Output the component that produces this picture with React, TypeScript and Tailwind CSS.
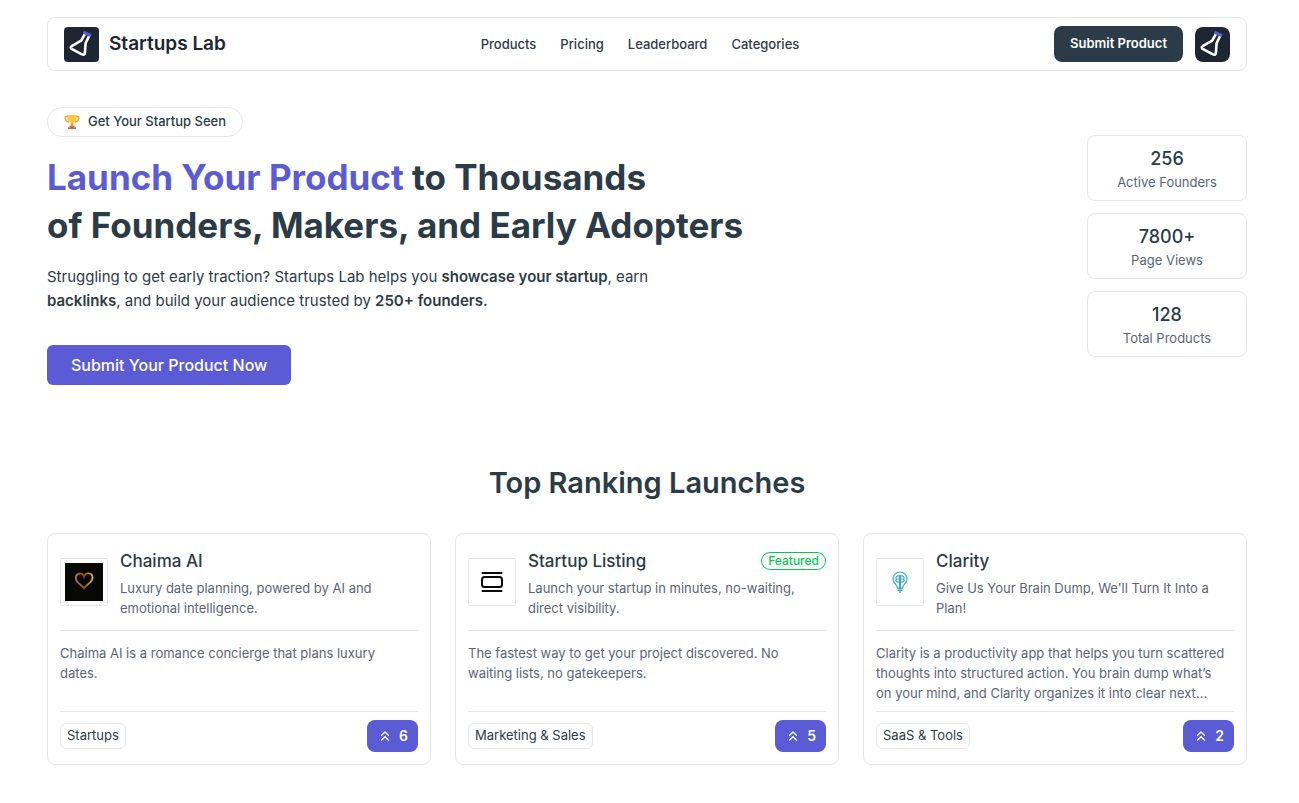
import type { ReactNode } from "react";
import { ChevronsUp } from "lucide-react";

type Launch = {
  name: string;
  tagline: string;
  description: string;
  category: string;
  votes: number;
  featured?: boolean;
  logo: ReactNode;
};

const links = ["Products", "Pricing", "Leaderboard", "Categories"];

const stats = [
  { value: "256", label: "Active Founders" },
  { value: "7800+", label: "Page Views" },
  { value: "128", label: "Total Products" },
];

function FlaskLogo({ className }: { className?: string }) {
  return (
    <svg viewBox="0 0 35 35" className={className} aria-hidden="true">
      <rect width="35" height="35" fill="#1e2633" />
      <path
        d="M20.6 7.6 L17.2 13.6 L7.6 19.2 Q5.8 20.6 7.6 21.9 L18 27.4 Q20.5 28.5 20.9 25.8 L21.6 16.2 L24.8 9.6"
        fill="none"
        stroke="#fff"
        strokeWidth="2.6"
        strokeLinecap="round"
        strokeLinejoin="round"
      />
      <path d="M19.4 5.1 L27 8.7" stroke="#5b5bd6" strokeWidth="3" />
    </svg>
  );
}

function Trophy() {
  return (
    <svg viewBox="0 0 16 16" className="size-4" aria-hidden="true">
      <path
        d="M4 2.5H1.4C1 5.5 2.2 7.4 5 8M12 2.5h2.6c.4 3-.8 4.9-3.6 5.500"
        fill="none"
        stroke="#f7a032"
        strokeWidth="1.4"
      />
      <path d="M3.2 1h9.6c0 5-1.6 8-4.8 9-3.2-1-4.8-4-4.8-9z" fill="#ffc83d" />
      <path d="M6.8 9.5h2.4V12H6.8z" fill="#f19020" />
      <path d="M5.5 11.8h5v1.4h-5zM4 13.2h8V15H4z" fill="#c8694b" />
    </svg>
  );
}

function HeartLogo() {
  return (
    <svg viewBox="0 0 38 38" className="size-[38px]" aria-hidden="true">
      <defs>
        <linearGradient id="gold" x1="0" y1="0" x2="1" y2="0">
          <stop offset="0" stopColor="#b07a38" />
          <stop offset="0.5" stopColor="#7a5220" />
          <stop offset="1" stopColor="#e0ad66" />
        </linearGradient>
      </defs>
      <rect width="38" height="38" fill="#080906" />
      <path
        d="M19 13.5c-1.5-4.500-8.500-3.500-8.200 2 .3 4.500 5.700 6 8.200 9.800 2-3.500 8.500-5.300 8.500-10.800 0-5-7-5.500-8.500-1z"
        fill="none"
        stroke="url(#gold)"
        strokeWidth="1.8"
      />
    </svg>
  );
}

function StackLogo() {
  return (
    <svg
      viewBox="0 0 24 24"
      className="size-6"
      fill="none"
      stroke="#0a0a0a"
      strokeWidth="2"
      strokeLinecap="round"
      aria-hidden="true"
    >
      <path d="M2.500 3h19M2.500 21h19" />
      <rect x="2" y="7" width="20" height="10" rx="2.500" />
    </svg>
  );
}

function BulbLogo() {
  return (
    <svg viewBox="0 0 16 22" className="h-[22px] w-4" fill="none" stroke="#3fa9ba" aria-hidden="true">
      <path
        d="M5.300 17c0-2-.8-3-2-4.200C1.800 11.300 1 9.800 1 7.800 1 3.900 4 1 8 1s7 2.900 7 6.800c0 2-.8 3.500-2.300 5-1.200 1.200-2 2.200-2 4.200"
        strokeWidth="1.200"
      />
      <path
        d="M7 4.800H5.500L4 6v4l1.500 1.200H7M9 4.800h1.500L12 6v4l-1.500 1.200H9M4 8h3M9 8h3"
        strokeWidth="1.200"
      />
      <path d="M8 4V17" strokeWidth="2.200" />
      <path d="M5 17.500h6M5.500 19.300h5M7 21h2" strokeWidth="1.300" />
    </svg>
  );
}

const launches: Launch[] = [
  {
    name: "Chaima AI",
    tagline: "Luxury date planning, powered by AI and emotional intelligence.",
    description: "Chaima AI is a romance concierge that plans luxury dates.",
    category: "Startups",
    votes: 6,
    logo: <HeartLogo />,
  },
  {
    name: "Startup Listing",
    tagline: "Launch your startup in minutes, no-waiting, direct visibility.",
    description:
      "The fastest way to get your project discovered. No waiting lists, no gatekeepers.",
    category: "Marketing & Sales",
    votes: 5,
    featured: true,
    logo: <StackLogo />,
  },
  {
    name: "Clarity",
    tagline: "Give Us Your Brain Dump, We'll Turn It Into a Plan!",
    description:
      "Clarity is a productivity app that helps you turn scattered thoughts into structured action. You brain dump what’s on your mind, and Clarity organizes it into clear next…",
    category: "SaaS & Tools",
    votes: 2,
    logo: <BulbLogo />,
  },
];

function Navbar() {
  return (
    <header className="flex h-[54px] items-center justify-between rounded-lg border border-gray-200 px-4">
      <a href="#" className="flex items-center gap-2.5 text-[19px] font-semibold text-[#1e2633]">
        <FlaskLogo className="size-[35px] rounded-sm" />
        Startups Lab
      </a>
      <nav className="flex gap-6 text-[13px] leading-5 font-medium">
        {links.map((link) => (
          <a key={link} href="#">
            {link}
          </a>
        ))}
      </nav>
      <div className="flex items-center gap-3">
        <button
          type="button"
          className="h-9 rounded-lg bg-[#2b3b47] px-4 text-[13px] font-semibold text-white"
        >
          Submit Product
        </button>
        <button type="button" aria-label="Account">
          <FlaskLogo className="size-[35px] rounded-lg" />
        </button>
      </div>
    </header>
  );
}

function Hero() {
  return (
    <section className="mt-9 flex items-center justify-between">
      <div>
        <div className="flex h-[30px] w-fit items-center gap-2 rounded-full border border-gray-200 px-4 text-[13px] font-medium">
          <Trophy />
          Get Your Startup Seen
        </div>
        <h1 className="mt-4 text-[35px] leading-12 font-bold">
          <span className="text-[#5b5bd6]">Launch Your Product</span> to Thousands
          <br />
          of Founders, Makers, and Early Adopters
        </h1>
        <p className="mt-4 max-w-[640px] text-[15px] leading-6">
          Struggling to get early traction? Startups Lab helps you{" "}
          <strong className="font-semibold">showcase your startup</strong>, earn{" "}
          <strong className="font-semibold">backlinks</strong>, and build your audience trusted by{" "}
          <strong className="font-semibold">250+ founders.</strong>
        </p>
        <button
          type="button"
          className="mt-8 block h-10 rounded-md bg-[#5b5bd6] px-6 text-base font-medium text-white"
        >
          Submit Your Product Now
        </button>
      </div>
      <div className="flex w-40 flex-col gap-3">
        {stats.map((stat) => (
          <div
            key={stat.label}
            className="flex h-[66px] flex-col items-center justify-center rounded-lg border border-gray-200"
          >
            <span className="text-lg leading-7 font-medium">{stat.value}</span>
            <span className="text-[13px] leading-[18px] text-[#5b6478]">{stat.label}</span>
          </div>
        ))}
      </div>
    </section>
  );
}

function LaunchCard({ launch }: { launch: Launch }) {
  return (
    <article className="flex flex-col rounded-lg border border-gray-200 p-3">
      <div className="flex items-center gap-3 border-b border-gray-200 pb-3">
        <div className="flex size-12 shrink-0 items-center justify-center rounded-xs border border-gray-200">
          {launch.logo}
        </div>
        <div className="min-w-0 flex-1">
          <div className="flex items-center justify-between">
            <h3 className="text-[17px] leading-[30px] font-medium">{launch.name}</h3>
            {launch.featured && (
              <span className="flex h-[18px] items-center rounded-full border border-green-500 px-1.5 text-xs font-medium text-green-500">
                Featured
              </span>
            )}
          </div>
          <p className="mt-0.5 text-[13px] leading-5 text-[#5b6478]">{launch.tagline}</p>
        </div>
      </div>
      <p className="mt-3 line-clamp-3 min-h-[60px] pr-1.5 text-[13px] leading-5 text-[#5b6478]">
        {launch.description}
      </p>
      <div className="mt-2 flex items-center justify-between border-t border-gray-200 pt-2">
        <span className="flex h-[26px] items-center rounded-md border border-gray-200 px-1.5 text-[13px]">
          {launch.category}
        </span>
        <button
          type="button"
          className="flex h-8 items-center gap-1.5 rounded-lg bg-[#5b5bd6] px-2.5 text-sm font-semibold text-white"
        >
          <ChevronsUp className="size-4" />
          {launch.votes}
        </button>
      </div>
    </article>
  );
}

export default function App() {
  return (
    <div className="min-h-screen bg-white pr-[5px] font-['Inter',sans-serif] text-[#2b3b47]">
      <div className="mx-auto max-w-[1200px] pt-[17px] pb-9">
        <Navbar />
        <Hero />
        <section className="mt-20">
          <h2 className="text-center text-[29px] leading-9 font-semibold">Top Ranking Launches</h2>
          <div className="mt-8 grid grid-cols-3 gap-6">
            {launches.map((launch) => (
              <LaunchCard key={launch.name} launch={launch} />
            ))}
          </div>
        </section>
      </div>
    </div>
  );
}
